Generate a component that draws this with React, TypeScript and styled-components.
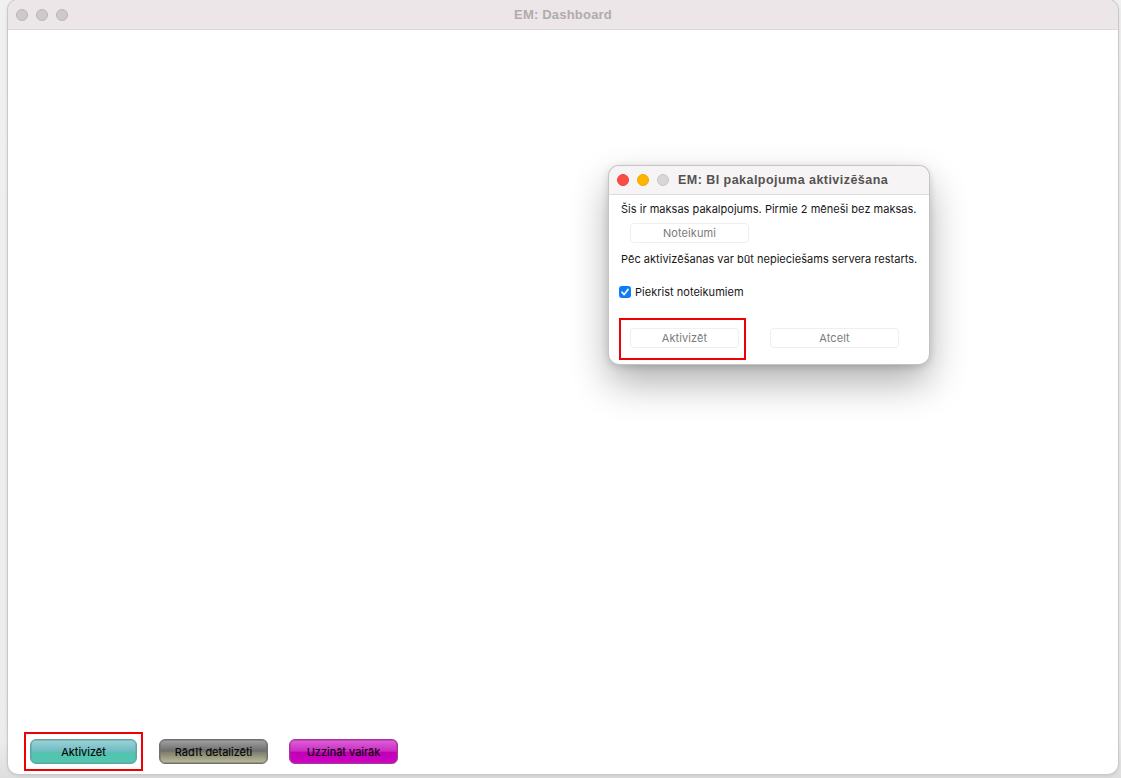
import React from "react";
import styled, { createGlobalStyle } from "styled-components";

const Global = createGlobalStyle`
  html, body { margin: 0; padding: 0; height: 100%; background: #e4e4e4; overflow: hidden; }
  #root { height: 100%; }
  * { box-sizing: border-box; }
`;

const Desktop = styled.div`
  width: 1121px;
  height: 778px;
  padding: 0 3px 4px 8px;
  font-family: Inter, "Liberation Sans", sans-serif;
  background: linear-gradient(180deg, #f0f0f0 0, #ececec 740px, #dedede 778px);
`;

const MainWindow = styled.div`
  position: relative;
  width: 1110px;
  height: 774px;
  display: flex;
  flex-direction: column;
  background: #fff;
  border-radius: 10px;
  overflow: hidden;
  box-shadow: 0 0 0 1px #c9c9c9, 0 1px 4px rgba(0, 0, 0, 0.14);
`;

const TitleBar = styled.div`
  position: relative;
  height: 30px;
  flex: none;
  display: flex;
  align-items: center;
  padding-left: 8px;
  gap: 8px;
  background: #ece6e8;
  border-bottom: 1px solid #dcd8d9;
`;

const Light = styled.span<{ $color: string; $edge: string }>`
  width: 12px;
  height: 12px;
  border-radius: 50%;
  background: ${(p) => p.$color};
  border: 1px solid ${(p) => p.$edge};
`;

const MainTitle = styled.div`
  position: absolute;
  left: 0;
  right: 0;
  text-align: center;
  font-size: 13px;
  font-weight: 700;
  letter-spacing: 0.2px;
  color: #b0acad;
  font-family: "Liberation Sans", sans-serif;
`;

const Body = styled.div`
  flex: 1;
`;

const Footer = styled.div`
  flex: none;
  display: flex;
  align-items: center;
  padding: 0 0 10px 22px;
  gap: 21px;
`;

const GlossButton = styled.div<{ $top: string; $mid: string; $low: string; $bottom: string; $edge: string; $w: number }>`
  width: ${(p) => p.$w}px;
  height: 25px;
  border-radius: 6px;
  border: 1px solid ${(p) => p.$edge};
  display: flex;
  align-items: center;
  justify-content: center;
  font-size: 11px;
  color: #050505;
  -webkit-text-stroke: 0.15px #050505;
  background: linear-gradient(180deg, ${(p) => p.$top} 0, ${(p) => p.$mid} 48%, ${(p) => p.$low} 54%, ${(p) => p.$bottom} 100%);
  box-shadow: inset 0 0 0 0.5px ${(p) => p.$edge};
`;

const Highlight = styled.div<{ $pad: string }>`
  border: 2px solid #f00000;
  padding: ${(p) => p.$pad};
  display: flex;
`;

const FooterHighlight = styled(Highlight)`
  margin: -8px -5px -8px -6px;
`;

const Dialog = styled.div`
  position: absolute;
  left: 601px;
  top: 166px;
  width: 320px;
  height: 198px;
  background: #fff;
  border-radius: 10px;
  display: flex;
  flex-direction: column;
  box-shadow: 0 0 0 1px #c4c4c4, 0 18px 38px rgba(0, 0, 0, 0.32), 0 2px 8px rgba(0, 0, 0, 0.18);
`;

const DialogBar = styled.div`
  height: 29px;
  flex: none;
  display: flex;
  align-items: center;
  padding-left: 8px;
  gap: 8px;
  background: #f6f4f4;
  border-bottom: 1px solid #dedcdc;
  border-radius: 10px 10px 0 0;
`;

const DialogTitle = styled.div`
  margin-left: 1px;
  font-size: 12.5px;
  font-weight: 700;
  color: #545252;
  font-family: "Liberation Sans", sans-serif;
  letter-spacing: 0.46px;
`;

const DialogBody = styled.div`
  display: flex;
  flex-direction: column;
  padding: 7px 0 0 12px;
  font-size: 11px;
  color: #161616;
`;

const Line = styled.div`
  height: 14px;
  line-height: 14px;
  white-space: nowrap;
  letter-spacing: 0.02px;
`;

const FlatButton = styled.div<{ $w: number }>`
  width: ${(p) => p.$w}px;
  height: 20px;
  border: 1px solid #f0efef;
  border-radius: 4px;
  background: #fff;
  display: flex;
  align-items: center;
  justify-content: center;
  font-size: 11px;
  letter-spacing: 0.1px;
  color: #7b7b7b;
`;

const TermsButton = styled(FlatButton)`
  margin: 7px 0 9px 9px;
`;

const CancelButton = styled(FlatButton)`
  margin-bottom: 2px;
`;

const CheckRow = styled.label`
  display: flex;
  align-items: center;
  gap: 4px;
  margin: 19px 0 0 -2px;
  height: 14px;
  letter-spacing: 0.02px;
`;

const CheckBox = styled.span`
  width: 12px;
  height: 12px;
  border-radius: 3px;
  background: #0f7bf5;
  display: flex;
  align-items: center;
  justify-content: center;
`;

const ActionRow = styled.div`
  display: flex;
  align-items: center;
  margin: 19px 0 0 -2px;
  gap: 24px;
`;

const ActionHighlight = styled(Highlight)`
  margin: 0;
`;

const Lights = ({ active }: { active: boolean }) => (
  <>
    <Light $color={active ? "#fc4d45" : "#cdc8ca"} $edge={active ? "#e8453d" : "#b9b4b6"} />
    <Light $color={active ? "#fdb500" : "#cdc8ca"} $edge={active ? "#ecaa05" : "#b9b4b6"} />
    <Light $color={active ? "#d8d6d6" : "#cdc8ca"} $edge={active ? "#c8c6c6" : "#b9b4b6"} />
  </>
);

export default function App() {
  return (
    <Desktop>
      <Global />
      <MainWindow>
        <TitleBar>
          <Lights active={false} />
          <MainTitle>EM: Dashboard</MainTitle>
        </TitleBar>
        <Body />
        <Footer>
          <FooterHighlight $pad="5px 4px 5px 4px">
            <GlossButton $w={107} $top="#9ed3d8" $mid="#6fbcc2" $low="#56c2b0" $bottom="#50c8ae" $edge="#5fa3a6">
              Aktivizēt
            </GlossButton>
          </FooterHighlight>
          <GlossButton $w={109} $top="#a2a2a2" $mid="#6d6d6d" $low="#80806f" $bottom="#bcbc98" $edge="#6f6f6f">
            Rādīt detalizēti
          </GlossButton>
          <GlossButton $w={109} $top="#dc62d6" $mid="#cc2cc4" $low="#bf00b4" $bottom="#d100c4" $edge="#a8329f">
            Uzzināt vairāk
          </GlossButton>
        </Footer>
        <Dialog>
          <DialogBar>
            <Lights active />
            <DialogTitle>EM: BI pakalpojuma aktivizēšana</DialogTitle>
          </DialogBar>
          <DialogBody>
            <Line>Šis ir maksas pakalpojums. Pirmie 2 mēneši bez maksas.</Line>
            <TermsButton $w={119}>Noteikumi</TermsButton>
            <Line>Pēc aktivizēšanas var būt nepieciešams servera restarts.</Line>
            <CheckRow>
              <CheckBox>
                <svg width="10" height="10" viewBox="0 0 10 10" fill="none">
                  <path d="M2 5.2 L4.2 7.6 L8 2.4" stroke="#fff" strokeWidth="1.7" strokeLinecap="round" strokeLinejoin="round" />
                </svg>
              </CheckBox>
              Piekrist noteikumiem
            </CheckRow>
            <ActionRow>
              <ActionHighlight $pad="8px 5px 10px 9px">
                <FlatButton $w={109}>Aktivizēt</FlatButton>
              </ActionHighlight>
              <CancelButton $w={129}>Atcelt</CancelButton>
            </ActionRow>
          </DialogBody>
        </Dialog>
      </MainWindow>
    </Desktop>
  );
}
